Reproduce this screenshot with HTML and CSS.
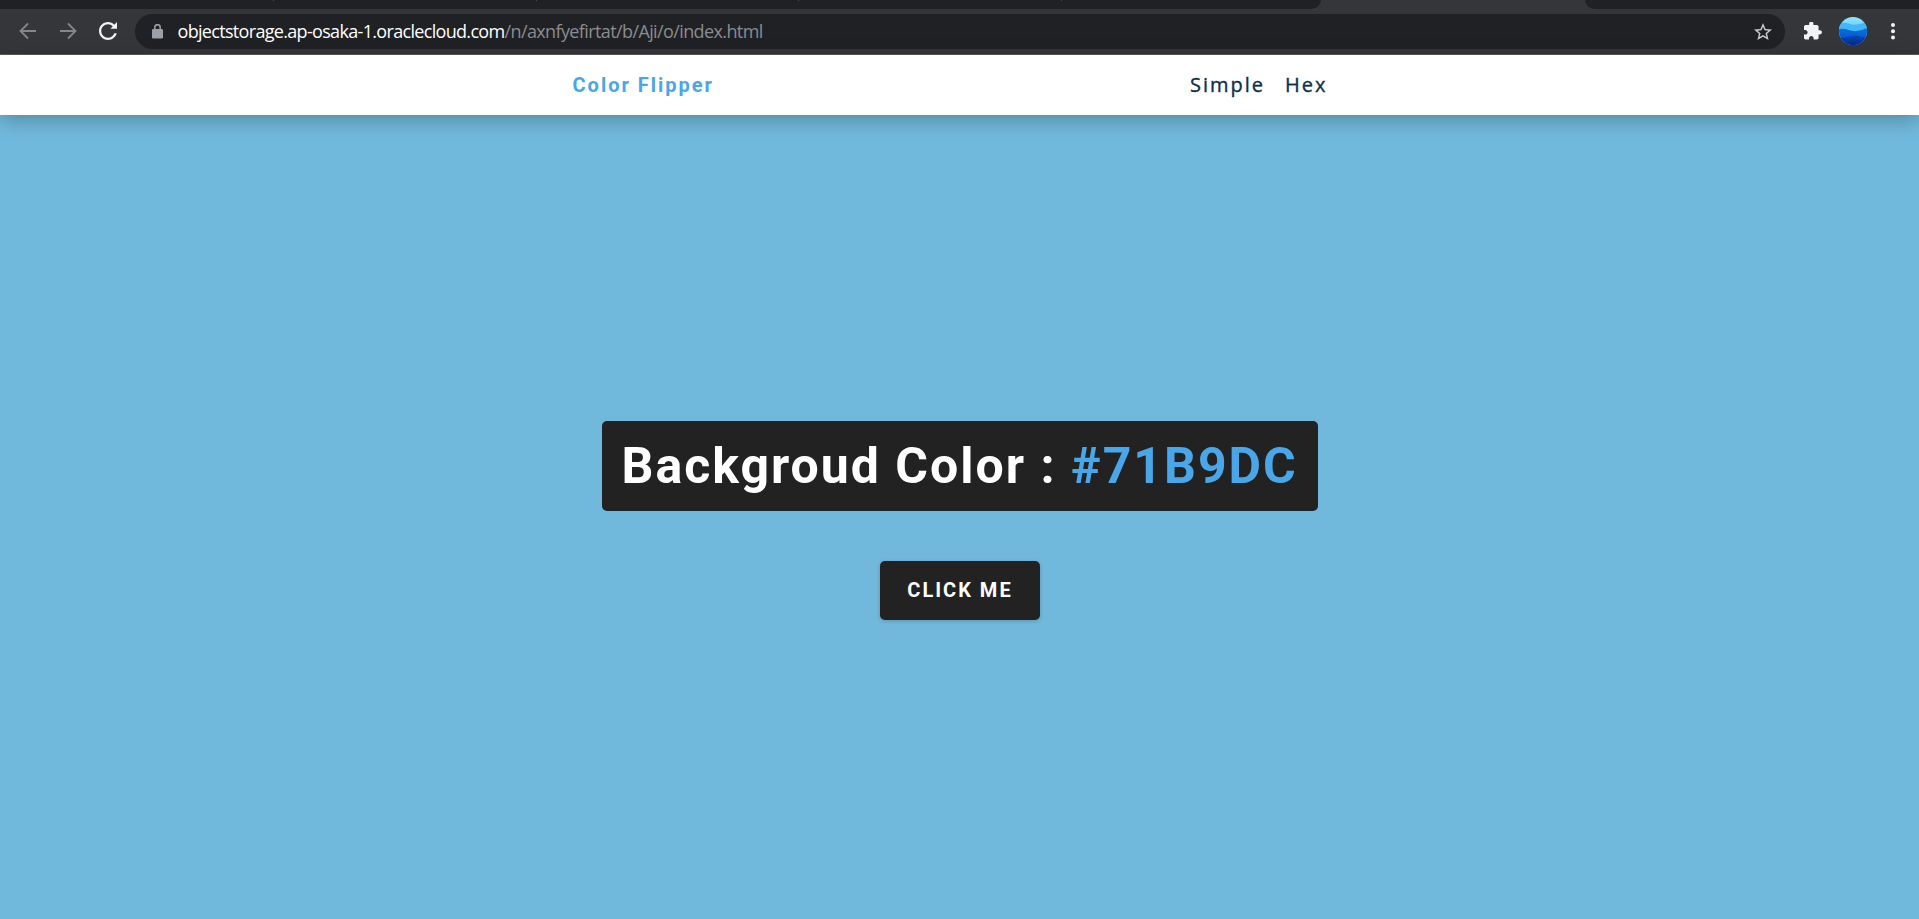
FILE: index.html
```html
<!DOCTYPE html>
<html lang="en">
<head>
<meta charset="utf-8">
<title>Color Flipper</title>
<link rel="stylesheet" href="styles.css">
</head>
<body>
<header class="browser">
  <div class="tabs">
    <div class="tabs-left"><i></i><i></i><i></i><i></i></div>
    <div class="tab-active"></div>
    <div class="tabs-right"></div>
  </div>
  <div class="toolbar">
    <div class="controls">
      <svg class="icon dim" width="18" height="18" viewBox="0 0 18 18"><path d="M17 9H2M9 1.500L1.500 9L9 16.500"/></svg>
      <svg class="icon dim" width="18" height="18" viewBox="0 0 18 18"><path d="M1 9H16M9 1.500L16.500 9L9 16.500"/></svg>
      <svg class="reload" width="18" height="18" viewBox="4 4 16 16"><path d="M17.650 6.350C16.200 4.900 14.210 4 12 4c-4.420 0-7.990 3.580-7.990 8s3.570 8 7.990 8c3.730 0 6.840-2.550 7.730-6h-2.080c-.82 2.330-3.040 4-5.650 4-3.310 0-6-2.690-6-6s2.690-6 6-6c1.660 0 3.140.69 4.220 1.780L14.200 10H20V4l-2.350 2.350z"/></svg>
    </div>
    <div class="omnibox">
      <svg class="lock" width="11" height="15" viewBox="0 0 11 15"><path class="shackle" d="M2.800 6V3.400a2.700 2.700 0 0 1 5.400 0V6"/><rect y="5" width="11" height="9.500" rx="1.200"/></svg>
      <span class="url"><span class="host">objectstorage.ap-osaka-1.oraclecloud.com</span><span class="path">/n/axnfyefirtat/b/Aji/o/index.html</span></span>
      <svg class="star" width="18" height="18" viewBox="2 2 20 20"><path d="M22 9.240l-7.190-.62L12 2 9.190 8.630 2 9.240l5.460 4.730L5.820 21 12 17.270 18.180 21l-1.630-7.030L22 9.240zM12 15.400l-3.760 2.270 1-4.280-3.320-2.880 4.380-.38L12 6.100l1.710 4.040 4.380.38-3.320 2.880 1 4.280L12 15.400z"/></svg>
    </div>
    <svg class="puzzle" width="18" height="18" viewBox="2 1.500 21 21"><path d="M20.500 11H19V7c0-1.100-.9-2-2-2h-4V3.500a2.500 2.500 0 0 0-5 0V5H4c-1.100 0-1.990.9-1.990 2v3.800H3.500c1.490 0 2.700 1.210 2.700 2.700s-1.210 2.700-2.700 2.700H2V20c0 1.100.9 2 2 2h3.800v-1.500c0-1.490 1.210-2.700 2.700-2.700s2.700 1.210 2.700 2.700V22H17c1.100 0 2-.9 2-2v-4h1.500a2.500 2.500 0 0 0 0-5z"/></svg>
    <svg class="avatar" width="28" height="28" viewBox="0 0 28 28"><defs><clipPath id="disc"><circle cx="14" cy="14" r="14"/></clipPath><linearGradient id="sky" x2="0" y2="1"><stop stop-color="#93e6ff"/><stop offset=".3" stop-color="#6dd5fc"/></linearGradient><linearGradient id="mid" x2="0" y2="1"><stop stop-color="#0b72df"/><stop offset=".6" stop-color="#0558cb"/></linearGradient><linearGradient id="sea" x2="0" y2="1"><stop stop-color="#0648b8"/><stop offset="1" stop-color="#062a8e"/></linearGradient></defs><g clip-path="url(#disc)"><path fill="url(#sky)" d="M0 0h28v28H0z"/><path fill="#43b5fa" d="M0 6q6-1 11 1t17-2v23H0z"/><path fill="url(#mid)" d="M0 12q5-1 10 1 8 3 18-2v17H0z"/><path fill="url(#sea)" d="M0 21q6 0 11-2 7-1 17 2v7H0z"/></g></svg>
    <svg class="kebab" width="4" height="17" viewBox="0 0 4 17"><circle cx="2" cy="2" r="2"/><circle cx="2" cy="8.300" r="2"/><circle cx="2" cy="14.600" r="2"/></svg>
  </div>
</header>
<nav class="nav">
  <div class="nav-center">
    <h4 class="brand">Color Flipper</h4>
    <ul class="nav-links"><li>Simple</li><li>Hex</li></ul>
  </div>
</nav>
<main class="main">
  <h2 class="readout">Backgroud Color : <span class="color">#71B9DC</span></h2>
  <button class="btn">click me</button>
</main>
</body>
</html>
```
FILE: styles.css
```css
* { margin: 0; padding: 0; box-sizing: border-box; }
body { height: 919px; overflow: hidden; background: #71b9dc; font-family: "Open Sans", sans-serif; display: flex; flex-direction: column; }
svg { display: block; flex: none; }

.browser { height: 55px; flex: none; background: #35363a; border-bottom: 1px solid #58595c; }
.tabs { height: 9px; display: flex; background: #35363a; }
.tabs-left { width: 1321px; background: #202124; border-bottom-right-radius: 10px 9px; display: flex; }
.tabs-left i { width: 262.500px; height: 1px; border-right: 1px solid #4a4b4f; }
.tabs-left i:first-child { width: 274px; }
.tab-active { width: 264px; }
.tabs-right { flex: 1; background: #202124; border-bottom-left-radius: 10px 9px; }
.toolbar { height: 44px; display: flex; align-items: center; padding-right: 24.500px; }
.controls { width: 135px; padding-left: 18.500px; display: flex; gap: 22px; }
.icon { fill: none; stroke: #85868a; stroke-width: 1.800; }
.reload { fill: #f1f3f4; }
.omnibox { width: 1650px; height: 35px; margin-top: 1px; border-radius: 18px; background: #202124; display: flex; align-items: center; padding: 0 13.500px 0 17px; }
.lock { fill: #9aa0a6; }
.shackle { fill: none; stroke: #9aa0a6; stroke-width: 1.500; }
.url { flex: 1; margin-left: 14.500px; padding-bottom: 1px; font-size: 18px; line-height: 24px; white-space: nowrap; }
.host { color: #fff; letter-spacing: -0.680px; }
.path { color: #8a8c8f; letter-spacing: -0.610px; }
.star { fill: #c9cacc; }
.puzzle { margin-left: 19px; fill: #f1f3f4; }
.avatar { margin-left: 17px; }
.kebab { margin-left: auto; fill: #f1f3f4; }

.nav { height: 60px; flex: none; background: #fff; box-shadow: 0 5px 19px rgba(0, 0, 0, .26); }
.nav-center { width: 774px; height: 100%; margin: 0 auto; padding-right: 19px; display: flex; align-items: center; justify-content: space-between; }
.brand { font: 700 20px/25px Roboto, sans-serif; letter-spacing: 2px; color: #49a6e9; }
.nav-links { display: flex; list-style: none; gap: 20px; font-size: 20px; line-height: 30px; letter-spacing: 2px; color: #0a2f4d; -webkit-text-stroke: .35px #0a2f4d; }
.main { flex: 1; display: flex; flex-direction: column; align-items: center; padding-top: 306px; }
.readout { width: 716px; height: 90px; margin-left: 1px; padding-left: 19.500px; border-radius: 5px; background: #222; color: #fff; font: 700 50px/90px Roboto, sans-serif; letter-spacing: 2px; white-space: nowrap; }
.color { color: #49a6e9; }
.btn { width: 160px; height: 59px; margin-top: 50px; padding: 0 0 2px 1px; border: 0; border-radius: 5px; background: #222; color: #fff; font: 700 20px Roboto, sans-serif; letter-spacing: 2px; text-transform: uppercase; box-shadow: 0 1px 4px rgba(0, 0, 0, .2); }
```
